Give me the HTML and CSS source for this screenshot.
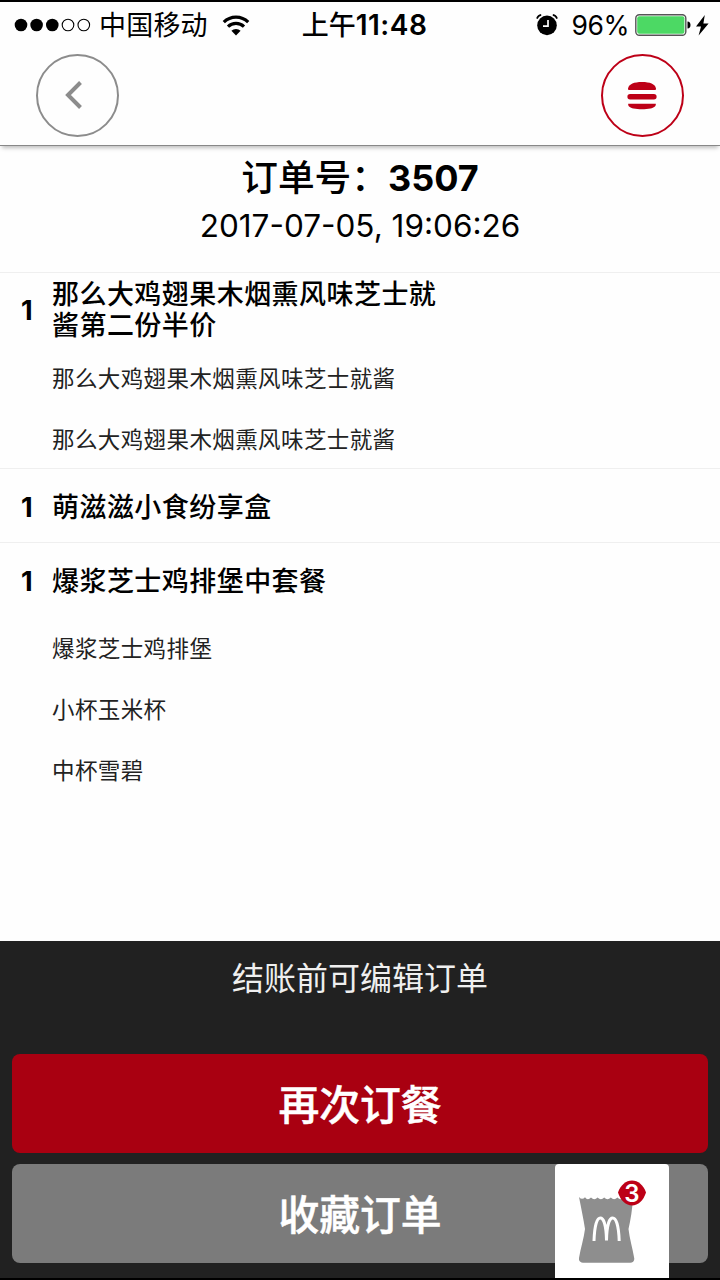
FILE: index.html
```html
<!DOCTYPE html>
<html lang="zh-CN">
<head>
    <meta charset="UTF-8">
    <meta name="viewport" content="width=device-width, initial-scale=1.0">
    <title>订单详情</title>
    <link rel="stylesheet" href="styles.css">
</head>
<body>
    <div class="phone">
        <div class="status-bar">
            <div class="status-left">
                <svg class="signal" width="78" height="14" viewBox="0 0 78 14">
                    <circle cx="7" cy="7" r="6.3"/>
                    <circle cx="22.6" cy="7" r="6.3"/>
                    <circle cx="38.3" cy="7" r="6.3"/>
                    <circle class="off" cx="54" cy="7" r="5.8"/>
                    <circle class="off" cx="69.8" cy="7" r="5.8"/>
                </svg>
                <span class="carrier">中国移动</span>
                <svg class="wifi" width="28" height="21" viewBox="0 0 28 21">
                    <path d="M1.8 7.2a17.3 17.3 0 0 1 24.4 0" />
                    <path d="M6 11.6a11.4 11.4 0 0 1 16 0" />
                    <path class="dot" d="M14 20.5l-4.6-4.7a6.5 6.5 0 0 1 9.2 0z"/>
                </svg>
            </div>
            <div class="time">上午<b>11:48</b></div>
            <div class="status-right">
                <svg class="alarm" width="22" height="22" viewBox="0 0 22 22">
                    <circle cx="11" cy="11.4" r="9.8"/>
                    <path d="M.9 4.6Q2.2 1.4 5.2.9M21.1 4.6Q19.8 1.4 16.8.9" fill="none" stroke="#000" stroke-width="1.6"/>
                    <path d="M12 6v6.2H7" fill="none" stroke="#fff" stroke-width="1.7"/>
                </svg>
                <span class="percent">96%</span>
                <svg class="battery" width="56" height="22" viewBox="0 0 56 22">
                    <rect x=".8" y=".8" width="50" height="20.4" rx="3.5" fill="#fff" stroke="#555" stroke-width="1.4"/>
                    <rect x="2.2" y="2.2" width="47.2" height="17.6" rx="2" fill="#4cd964"/>
                    <path d="M52.5 7.4q3 .4 3 3.6t-3 3.6z"/>
                </svg>
                <svg class="bolt" width="13" height="21" viewBox="0 0 13 21">
                    <path d="M8.8 0L0 11.4h5L2.6 20.6 12.6 8.6H7.4z"/>
                </svg>
            </div>
        </div>

        <div class="nav">
            <button class="round back">
                <svg width="18" height="28" viewBox="0 0 18 28">
                    <path d="M15.5 1.5L3 14l12.5 12.5"/>
                </svg>
            </button>
            <button class="round menu">
                <svg width="30" height="28" viewBox="0 0 30 28">
                    <path d="M1 6.4C2 2 7 0 15 0s13 2 14 6.4c.1 1.2-.4 1.6-1.4 1.6H2.400C1.400 8 .9 7.600 1 6.400z"/>
                    <rect x=".4" y="12" width="29.2" height="5.5" rx="2.7"/>
                    <path d="M1.2 21.800h27.600c.3 2.600-1.800 4-5.300 4.700-5 1-12 1-17 0-3.500-.7-5.600-2.100-5.300-4.700z"/>
                </svg>
            </button>
        </div>

        <div class="order-info">
            <div class="order-no">订单号：<b>3507</b></div>
            <div class="order-date">2017-07-05, 19:06:26</div>
        </div>

        <div class="order-list">
            <div class="item first">
                <div class="item-head">
                    <span class="qty">1</span>
                    <span class="name">那么大鸡翅果木烟熏风味芝士就<br>酱第二份半价</span>
                </div>
                <p class="sub">那么大鸡翅果木烟熏风味芝士就酱</p>
                <p class="sub">那么大鸡翅果木烟熏风味芝士就酱</p>
            </div>
            <div class="item">
                <div class="item-head">
                    <span class="qty">1</span>
                    <span class="name">萌滋滋小食纷享盒</span>
                </div>
            </div>
            <div class="item last">
                <div class="item-head">
                    <span class="qty">1</span>
                    <span class="name">爆浆芝士鸡排堡中套餐</span>
                </div>
                <p class="sub">爆浆芝士鸡排堡</p>
                <p class="sub">小杯玉米杯</p>
                <p class="sub">中杯雪碧</p>
            </div>
        </div>

        <div class="footer">
            <p class="note">结账前可编辑订单</p>
            <button class="btn reorder">再次订餐</button>
            <button class="btn save">收藏订单</button>
            <div class="bag">
                <svg width="56" height="68" viewBox="0 0 56 68">
                    <path class="paper" d="M0 1q3 3.600 6 .2 2.500 4 6 .4 3.300 3.200 6.600 0 3.300 3.200 6.600 0 3.300 3.200 6.600 0 3.300 3.200 6.600 0 3.300 3.200 6.600 0 4 3 9-.6C53.500 13 51.500 24 49.500 33c1 9 4 19 5.700 29 .5 3-1.300 4.700-4 4.700H4c-2.700 0-4.500-1.700-4-4.700 1.700-10 4.900-20 6-29C4.500 23 2.200 12 0 1z"/>
                    <path class="arches" d="M15 45C15.500 29 18 22 21.300 22s6 7.500 6.200 22.500c.2-15 2.900-22.500 6.200-22.500s6 7 6.500 23"/>
                </svg>
                <div class="badge">
                    <svg width="28" height="26" viewBox="0 0 28 26">
                        <path d="M0 12.500C2.500 5 8 .5 14 .5S25.500 5 28 12.500C25.500 20.500 20 25.500 14 25.500S2.500 20.500 0 12.500z"/>
                    </svg>
                    <span class="count">3</span>
                </div>
            </div>
        </div>
    </div>
</body>
</html>
```

FILE: styles.css
```css
* {
    box-sizing: border-box;
}
body {
    margin: 0;
    background: #fefefe;
    font-family: Inter, "Noto Sans CJK SC", sans-serif;
    color: #000;
}
p {
    margin: 0;
}
button {
    padding: 0;
    border: none;
    font-family: inherit;
}
svg {
    display: block;
    flex: none;
}
.phone {
    width: 720px;
    height: 1280px;
    display: flex;
    flex-direction: column;
    border-top: 2px solid #000;
    overflow: hidden;
}

/* Status bar */
.status-bar {
    height: 46px;
    display: grid;
    grid-template-columns: 1fr auto 1fr;
    align-items: center;
    padding: 0 11px 2px 14px;
    font-size: 27px;
    line-height: 44px;
    white-space: nowrap;
}
.status-left, .status-right {
    display: flex;
    align-items: center;
}
.status-right {
    justify-content: flex-end;
}
.signal .off {
    fill: none;
    stroke: #000;
    stroke-width: 1.1;
}
.carrier {
    margin-left: 7px;
    padding-top: 1px;
    letter-spacing: 0.2px;
}
.wifi {
    margin-left: 14px;
    fill: none;
    stroke: #000;
    stroke-width: 3.2;
}
.wifi .dot {
    fill: #000;
    stroke: none;
}
.time {
    padding: 1px 0 0 6px;
    font-weight: 500;
}
.time b {
    font-size: 28px;
    font-weight: 600;
    letter-spacing: 0.5px;
}
.alarm {
    margin-top: -1px;
}
.percent {
    margin: 0 6px 0 14px;
    font-size: 26.5px;
    letter-spacing: -0.5px;
}
.bolt {
    margin-left: 5px;
}

/* Top navigation */
.nav {
    height: 98px;
    display: flex;
    justify-content: space-between;
    padding: 6px 36px 0;
    border-bottom: 1px solid #888;
    box-shadow: 0 4px 4px -2px rgba(0, 0, 0, 0.25);
}
.round {
    width: 83px;
    height: 83px;
    display: flex;
    justify-content: center;
    align-items: center;
    border-radius: 50%;
    background: none;
}
.back {
    border: 2.5px solid #8c8c8c;
    padding: 0 8px 1px 0;
}
.back path {
    fill: none;
    stroke: #8c8c8c;
    stroke-width: 4;
}
.menu {
    border: 2.5px solid #bd0017;
    padding-right: 1px;
    fill: #bd0017;
}

/* Order number and date */
.order-info {
    height: 127px;
    padding-top: 8px;
    border-bottom: 1px solid #efefef;
    text-align: center;
}
.order-no {
    height: 48px;
    line-height: 48px;
    font-size: 36.7px;
    font-weight: 500;
}
.order-no b {
    font-weight: 700;
    font-size: 36px;
}
.order-date {
    height: 46px;
    padding-top: 1px;
    line-height: 46px;
    font-size: 31.5px;
}

/* Ordered items */
.order-list {
    flex: 1;
}
.item {
    border-bottom: 1px solid #efefef;
}
.item.first {
    height: 196px;
}
.item.first .item-head {
    height: 75px;
    padding: 0 0 1px 21px;
}
.item.last {
    border: none;
}
.item-head {
    height: 73px;
    display: flex;
    align-items: center;
    padding: 3px 0 0 21px;
}
.last .item-head {
    height: 75px;
    padding-top: 2px;
}
.qty {
    width: 31px;
    font-size: 27px;
    font-weight: 700;
}
.name {
    font-size: 27px;
    font-weight: 500;
    line-height: 31px;
    letter-spacing: 0.45px;
}
.sub {
    height: 61px;
    padding-left: 52px;
    line-height: 61px;
    font-size: 22.5px;
    letter-spacing: 0.4px;
    color: #222;
}

/* Bottom actions */
.footer {
    position: relative;
    height: 339px;
    padding: 0 12px;
    background: #212121;
    border-bottom: 2px solid #000;
}
.note {
    height: 113px;
    padding-top: 14px;
    line-height: 48px;
    font-size: 32px;
    text-align: center;
    color: #efefef;
}
.btn {
    width: 100%;
    height: 99px;
    display: block;
    padding-bottom: 2px;
    border-radius: 8px;
    color: #fff;
    font-size: 40.8px;
    font-weight: 500;
    -webkit-text-stroke: 0.5px #fff;
}
.reorder {
    margin-bottom: 11px;
    background: #a90011;
}
.save {
    background: #7b7b7b;
}
.bag {
    position: absolute;
    right: 51px;
    bottom: 0;
    width: 114px;
    height: 114px;
    padding: 32px 0 0 24px;
    border-radius: 4px 4px 0 0;
    background: #fff;
}
.paper {
    fill: #8e8e8e;
}
.arches {
    fill: none;
    stroke: #fff;
    stroke-width: 3;
}
.badge {
    position: absolute;
    top: 16px;
    left: 63px;
    display: grid;
    fill: #bd0017;
}
.badge svg, .count {
    grid-area: 1 / 1;
}
.count {
    color: #fff;
    font-size: 24px;
    font-weight: 600;
    line-height: 27px;
    text-align: center;
}
```
